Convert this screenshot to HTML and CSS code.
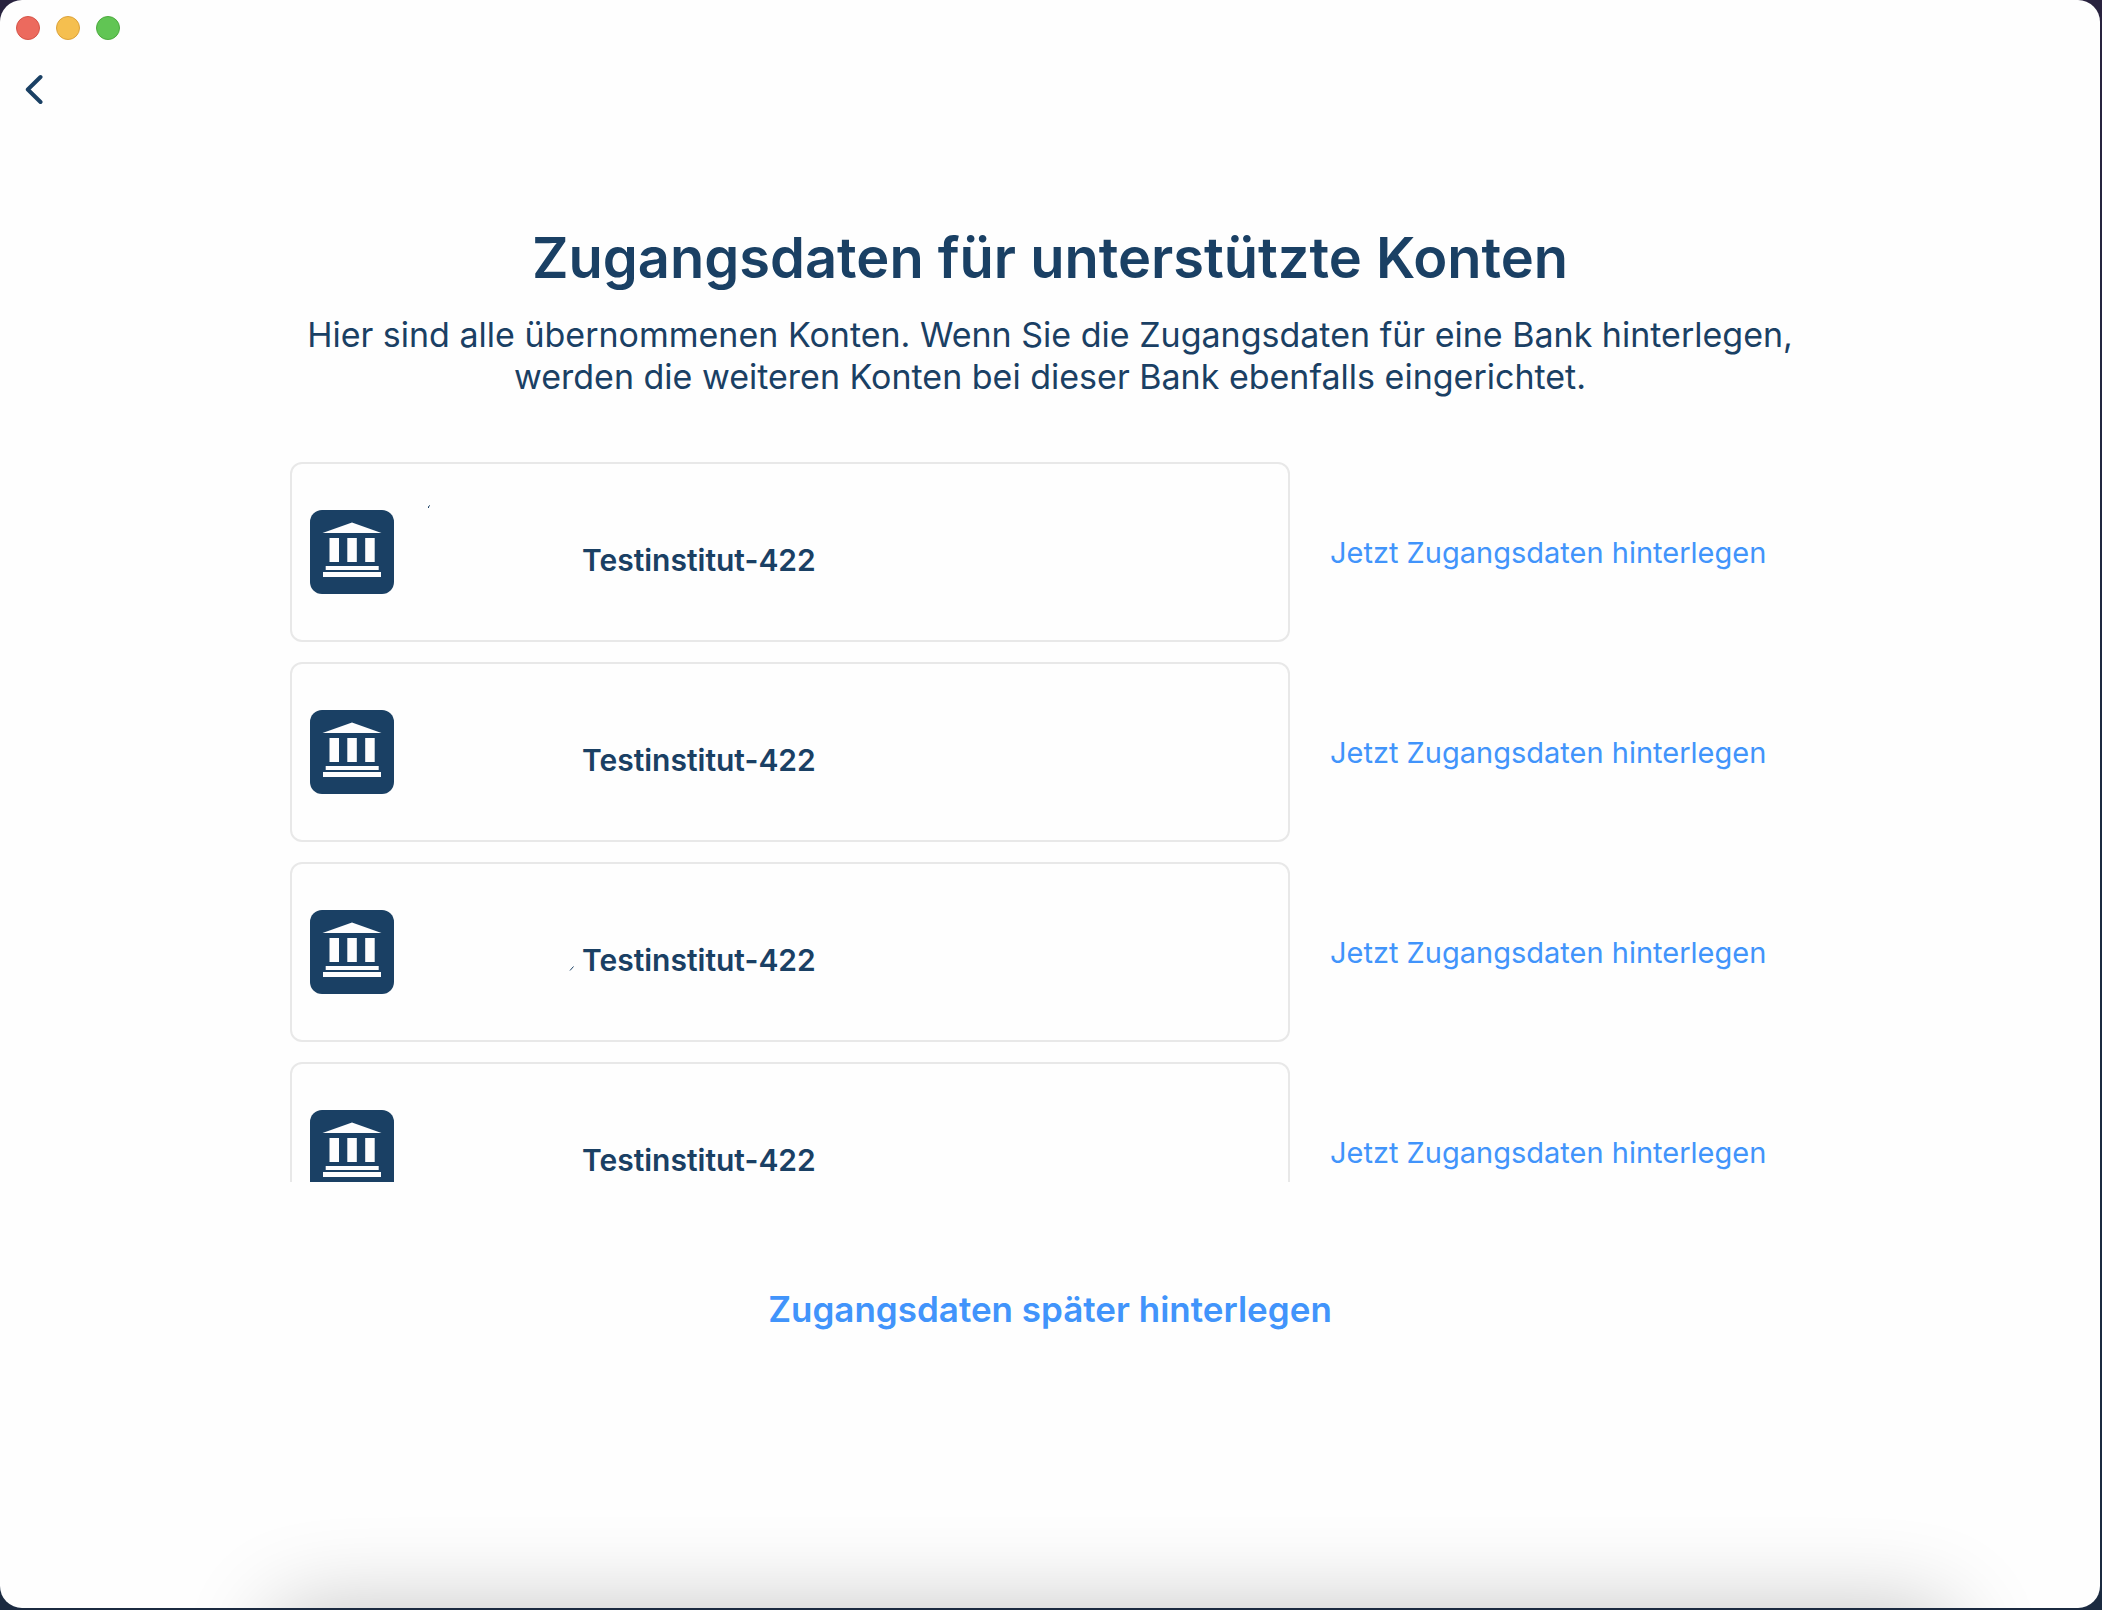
FILE: index.html
```html
<!DOCTYPE html>
<html lang="de">
<head>
  <meta charset="UTF-8" />
  <meta name="viewport" content="width=device-width, initial-scale=1.0" />
  <title>Zugangsdaten für unterstützte Konten</title>
  <link rel="stylesheet" href="styles.css">
</head>
<body>

  <!-- Bank icon, shared by all rows -->
  <svg class="sprite" aria-hidden="true">
    <symbol id="bank" viewBox="0 0 84 84">
      <path d="M42 12.5 L71.5 23 H12.5 Z" />
      <rect x="19.5" y="28" width="9.5" height="24" />
      <rect x="37.3" y="28" width="9.5" height="24" />
      <rect x="55.2" y="28" width="9.5" height="24" />
      <rect x="15.7" y="56" width="53" height="4" />
      <rect x="13" y="62" width="58" height="5" />
    </symbol>
  </svg>

  <div class="window">
    <!-- Window Buttons -->
    <div class="titlebar">
      <button class="dot close" aria-label="Schließen"></button>
      <button class="dot minimize" aria-label="Minimieren"></button>
      <button class="dot maximize" aria-label="Maximieren"></button>
    </div>

    <button class="back" aria-label="Zurück">
      <svg width="20" height="34" viewBox="0 0 20 34">
        <path d="M15.500 5 L2.800 17.500 L15.500 30" />
      </svg>
    </button>

    <main>
      <h1>Zugangsdaten für unterstützte Konten</h1>
      <p class="intro">
        Hier sind alle übernommenen Konten. Wenn Sie die Zugangsdaten für eine Bank hinterlegen,
        werden die weiteren Konten bei dieser Bank ebenfalls eingerichtet.
      </p>

      <!-- Accounts -->
      <ul class="accounts">
        <li>
          <div class="card">
            <svg class="bank-icon"><use href="#bank" /></svg>
            <svg class="owner" viewBox="0 0 188 100"><path d="M34.500 6 V4.500 L36 3.500" /></svg>
            <span class="name">Testinstitut-422</span>
          </div>
          <a href="#">Jetzt Zugangsdaten hinterlegen</a>
        </li>
        <li>
          <div class="card">
            <svg class="bank-icon"><use href="#bank" /></svg>
            <svg class="owner" viewBox="0 0 188 100"></svg>
            <span class="name">Testinstitut-422</span>
          </div>
          <a href="#">Jetzt Zugangsdaten hinterlegen</a>
        </li>
        <li>
          <div class="card">
            <svg class="bank-icon"><use href="#bank" /></svg>
            <svg class="owner" viewBox="0 0 188 100"><path d="M176 68.500 L179.500 64.500" /></svg>
            <span class="name">Testinstitut-422</span>
          </div>
          <a href="#">Jetzt Zugangsdaten hinterlegen</a>
        </li>
        <li>
          <div class="card">
            <svg class="bank-icon"><use href="#bank" /></svg>
            <svg class="owner" viewBox="0 0 188 100"></svg>
            <span class="name">Testinstitut-422</span>
          </div>
          <a href="#">Jetzt Zugangsdaten hinterlegen</a>
        </li>
      </ul>

      <button class="later">Zugangsdaten später hinterlegen</button>
    </main>
  </div>

</body>
</html>
```

FILE: styles.css
```css
* {
  box-sizing: border-box;
}

body {
  background: linear-gradient(#29233f, #1b2a40 50%);
  font-family: Inter, "Liberation Sans", sans-serif;
  margin: 0;
  padding: 0 2px 2px 0;
  min-height: 100vh;
  display: flex;
  color: #1a4064;
}

button {
  background: none;
  border: none;
  padding: 0;
  font: inherit;
  color: inherit;
}

.sprite {
  position: absolute;
  width: 0;
  height: 0;
}

.window {
  position: relative;
  flex: 1;
  background: #fefefe;
  border-radius: 22px;
  overflow: hidden;
}

/* soft shadow along the bottom edge */
.window::after {
  content: "";
  position: absolute;
  left: 13%;
  right: 7%;
  top: 100%;
  height: 200px;
  border-radius: 30px;
  box-shadow: 0 0 90px rgba(0, 0, 0, 0.23);
  pointer-events: none;
}

.titlebar {
  display: flex;
  gap: 16px;
  padding: 16px 16px 0;
}

.dot {
  width: 24px;
  height: 24px;
  border-radius: 50%;
  border: 1px solid;
}

.close {
  background: #ec6a5e;
  border-color: #d55448;
}

.minimize {
  background: #f5bf4f;
  border-color: #dba23a;
}

.maximize {
  background: #61c554;
  border-color: #4caa3e;
}

.back {
  display: block;
  margin: 32px 0 0 25px;
}

.back svg {
  display: block;
  fill: none;
  stroke: #1a4064;
  stroke-width: 4;
  stroke-linecap: round;
  stroke-linejoin: round;
}

main {
  max-width: 1520px;
  margin: 0 auto;
  padding-top: 116px;
  display: flex;
  flex-direction: column;
  align-items: center;
  text-align: center;
}

h1 {
  margin: 0;
  font-size: 56px;
  font-weight: 600;
  line-height: 72px;
}

.intro {
  margin: 20px 0 0;
  font-size: 34px;
  line-height: 42px;
}

.accounts {
  list-style: none;
  width: 100%;
  height: 720px;
  margin: 64px 0 0;
  padding: 0;
  overflow: hidden;
  text-align: left;
}

.accounts li {
  display: grid;
  grid-template-columns: 25fr 12fr;
  gap: 40px;
  align-items: center;
  margin-bottom: 20px;
}

.card {
  display: flex;
  align-items: center;
  height: 180px;
  padding: 0 18px;
  border: 2px solid #e8e8e8;
  border-radius: 12px;
}

.bank-icon {
  width: 84px;
  height: 84px;
  flex: none;
  background: #1a4064;
  border-radius: 12px;
  fill: #fefefe;
}

.owner {
  width: 188px;
  height: 100px;
  flex: none;
  fill: none;
  stroke: #1a4064;
}

.name {
  font-size: 30px;
  font-weight: 600;
  padding-top: 16px;
}

.accounts a {
  color: #4194fb;
  font-size: 29px;
  text-decoration: none;
}

.later {
  margin-top: 105px;
  color: #4194fb;
  font-size: 35px;
  font-weight: 600;
  line-height: 44px;
}
```
